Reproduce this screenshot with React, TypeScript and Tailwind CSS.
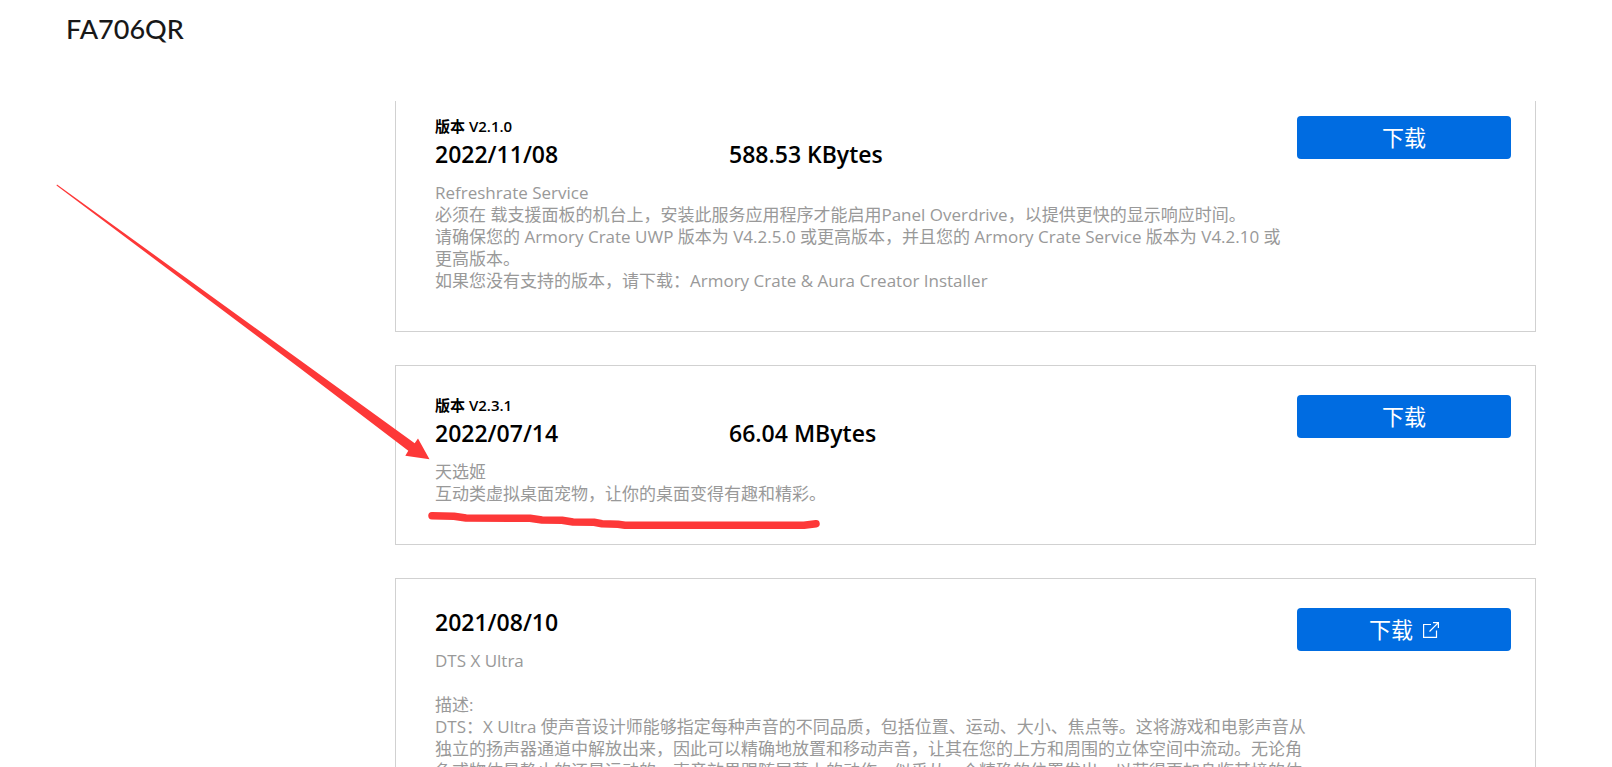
import React from "react";

type Download = {
  version?: string;
  date: string;
  size?: string;
  lines: string[];
  external?: boolean;
};

const downloads: Download[] = [
  {
    version: "版本 V2.1.0",
    date: "2022/11/08",
    size: "588.53 KBytes",
    lines: [
      "Refreshrate Service",
      "必须在 载支援面板的机台上，安装此服务应用程序才能启用Panel Overdrive，以提供更快的显示响应时间。",
      "请确保您的 Armory Crate UWP 版本为 V4.2.5.0 或更高版本，并且您的 Armory Crate Service 版本为 V4.2.10 或",
      "更高版本。",
      "如果您没有支持的版本，请下载：Armory Crate & Aura Creator Installer",
    ],
  },
  {
    version: "版本 V2.3.1",
    date: "2022/07/14",
    size: "66.04 MBytes",
    lines: ["天选姬", "互动类虚拟桌面宠物，让你的桌面变得有趣和精彩。"],
  },
  {
    date: "2021/08/10",
    external: true,
    lines: [
      "DTS X Ultra",
      "",
      "描述:",
      "DTS：X Ultra 使声音设计师能够指定每种声音的不同品质，包括位置、运动、大小、焦点等。这将游戏和电影声音从",
      "独立的扬声器通道中解放出来，因此可以精确地放置和移动声音，让其在您的上方和周围的立体空间中流动。无论角",
      "色或物体是静止的还是运动的，声音效果跟随屏幕上的动作，似乎从一个精确的位置发出，以获得更加身临其境的体",
    ],
  },
];

function ExternalIcon() {
  return (
    <svg className="size-4" viewBox="0 0 16 16" fill="none" stroke="currentColor" strokeWidth="1.2" aria-hidden="true">
      <path d="M8 2.500H.6v12.900h12.900V8.500" />
      <path d="M10 .6h5.400V6M15.400.6L6.500 9.500" />
    </svg>
  );
}

function DownloadCard({ item, first }: { item: Download; first: boolean }) {
  return (
    <article
      className={
        first
          ? "flex items-start border border-t-0 border-[#d1d1d1] pt-[15px] pr-6 pb-[39px] pl-[39px]"
          : "flex items-start border border-[#d1d1d1] pt-[29px] pr-6 pb-[39px] pl-[39px]"
      }
    >
      <div className="min-w-0 flex-1">
        {item.version && <p className="mb-1 text-[15px] leading-5 font-semibold text-black">{item.version}</p>}
        <div className="mb-[14px] flex text-[23px] leading-7 font-semibold text-black">
          <p className="w-[294px]">{item.date}</p>
          {item.size && <p>{item.size}</p>}
        </div>
        <div className="text-[17px] leading-[22px] whitespace-nowrap text-[#999999]">
          {item.lines.map((line, i) => (
            <p key={i} className="min-h-[22px]">
              {line}
            </p>
          ))}
        </div>
      </div>
      <button
        type="button"
        className="flex h-[43px] w-[214px] shrink-0 items-center justify-center gap-[10px] rounded bg-[#006ce1] text-[22px] text-white"
      >
        下载
        {item.external && <ExternalIcon />}
      </button>
    </article>
  );
}

function Annotation() {
  return (
    <svg className="pointer-events-none absolute top-0 left-0 h-[767px] w-[900px]" viewBox="0 0 900 767" aria-hidden="true">
      <path d="M57 184.500L300 360.300L414.700 443.300L418 438.500L429.500 459.300L405.300 455.700L408.300 450.700L300 368.300L56.500 185.500Z" fill="#fd3838" />
      <path
        d="M432 515.700L454 516.300L466 518L530 518.300L542 520L562 520.300L573 522L594 522.300L602 523.700L618 524.300L625 525.300L804 525.300L816 523.700"
        fill="none"
        stroke="#fd3838"
        strokeWidth="7.500"
        strokeLinecap="round"
        strokeLinejoin="round"
      />
    </svg>
  );
}

export default function App() {
  return (
    <div className="relative flex h-screen flex-col overflow-hidden bg-white font-['Open_Sans','Noto_Sans_CJK_SC',sans-serif]">
      <header className="h-[101px] shrink-0 px-[66px] pt-[11px]">
        <h1 className="font-['Lato','Noto_Sans_CJK_SC',sans-serif] text-[27px] leading-9 font-medium text-[#181818]">FA706QR</h1>
      </header>
      <main className="flex min-h-0 flex-1 flex-col gap-[33px] overflow-hidden pr-[76px] pl-[395px]">
        {downloads.map((item, i) => (
          <div key={item.date} className="shrink-0">
            <DownloadCard item={item} first={i === 0} />
          </div>
        ))}
      </main>
      <Annotation />
    </div>
  );
}
